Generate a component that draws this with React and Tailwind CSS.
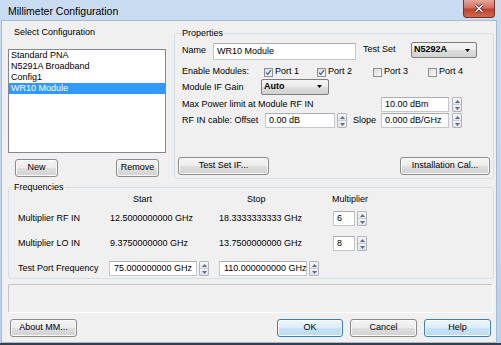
import React from 'react';

function Btn({ children, className = '', primary }) {
  return (
    <div
      className={`flex items-center justify-center h-[18px] rounded-[3px] border shadow-[inset_0_0_0_1px_#fbfbfb] ${
        primary
          ? 'border-[#3c7fb1] bg-[linear-gradient(#ecf5fc_0%,#dcecf9_50%,#c8e2f7_50%,#bcdaf3_100%)]'
          : 'border-[#8a8a8a] bg-[linear-gradient(#f4f4f4_0%,#ececec_50%,#dedede_50%,#d2d2d2_100%)]'
      } ${className}`}
    >
      {children}
    </div>
  );
}

function Spin({ className = '' }) {
  return (
    <div className={`flex flex-col w-[10px] h-[15px] border border-[#b3b7bd] rounded-[1px] ${className}`}>
      <div className="flex-1 flex items-center justify-center border-b border-[#c9ccd1] bg-[linear-gradient(#f7f7f7,#e4e6e9)]">
        <svg width="5" height="3" viewBox="0 0 5 3">
          <path d="M0 3 L2.5 0 L5 3Z" fill="#5a6e92" />
        </svg>
      </div>
      <div className="flex-1 flex items-center justify-center bg-[linear-gradient(#f1f2f3,#dfe2e6)]">
        <svg width="5" height="3" viewBox="0 0 5 3">
          <path d="M0 0 L5 0 L2.5 3Z" fill="#5a6e92" />
        </svg>
      </div>
    </div>
  );
}

function Field({ value, className = '' }) {
  return (
    <div className={`h-[15px] bg-white border border-[#c3c7cd] border-t-[#abadb3] pl-[3px] leading-[13px] whitespace-nowrap ${className}`}>
      {value}
    </div>
  );
}

function Combo({ value, className = '' }) {
  return (
    <div
      className={`flex items-center justify-between h-[16px] border border-[#7e7e7e] rounded-[2px] bg-[linear-gradient(#f4f4f4_0%,#ececec_50%,#dedede_50%,#d2d2d2_100%)] pl-[2px] pr-[6px] ${className}`}
    >
      <span className="font-bold">{value}</span>
      <svg width="5" height="3" viewBox="0 0 5 3">
        <path d="M0 0 L5 0 L2.5 3Z" fill="#000" />
      </svg>
    </div>
  );
}

function Check({ checked, label, className = '' }) {
  return (
    <div className={`flex items-center ${className}`}>
      <div className="w-[9px] h-[9px] border border-[#8e8f8f] bg-[linear-gradient(135deg,#dadada,#fbfbfb)] flex items-center justify-center">
        {checked && (
          <svg width="7" height="7" viewBox="0 0 7 7">
            <path d="M1 3.6 L2.8 5.4 L6 1.2" stroke="#2b5aa6" strokeWidth="1.2" fill="none" />
          </svg>
        )}
      </div>
      <span className="ml-[2px]">{label}</span>
    </div>
  );
}

const configs = ['Standard PNA', 'N5291A Broadband', 'Config1', 'WR10 Module'];

export default function App() {
  return (
    <div className="w-[501px] h-[345px] flex flex-col bg-[linear-gradient(#c9dcf2,#bcd2ec)] border-b-2 border-[#34404f] font-['Liberation_Sans',Arial,sans-serif] text-[9px] text-black overflow-hidden">
      {/* Title bar */}
      <div className="h-[21px] flex justify-between shrink-0">
        <div className="pl-[8px] pt-[4px] text-[10.5px] leading-[14px]">Millimeter Configuration</div>
        <div className="mr-[6px] w-[32px] h-[18px] rounded-b-[4px] border border-t-0 border-[#7a2f27] bg-[linear-gradient(#e7a89c_0%,#d4705f_45%,#c1412f_55%,#cf6a4f_100%)] flex items-center justify-center">
          <svg width="10" height="9" viewBox="0 0 10 9">
            <path d="M1.5 1 L8.5 8 M8.5 1 L1.5 8" stroke="#4a1b15" strokeWidth="3" />
            <path d="M1.5 1 L8.5 8 M8.5 1 L1.5 8" stroke="#ffffff" strokeWidth="1.6" />
          </svg>
        </div>
      </div>

      {/* Client area */}
      <div className="flex-1 ml-[2px] mr-[5px] mb-[1px] bg-[#f0f0f0] shadow-[0_0_0_1px_#a8bad0] flex flex-col">
        {/* Top section */}
        <div className="flex h-[158px] shrink-0">
          {/* Select configuration */}
          <div className="ml-[6px] w-[158px] flex flex-col">
            <div className="mt-[5px] pl-[6px] h-[12px] leading-[12px]">Select Configuration</div>
            <div className="mt-[11px] h-[104px] border border-[#828790] bg-white">
              {configs.map((c, i) => (
                <div
                  key={c}
                  className={`h-[11px] leading-[11px] pl-[2px] ${i === 3 ? 'bg-[#3399ff] text-white' : ''}`}
                >
                  {c}
                </div>
              ))}
            </div>
            <div className="mt-[6px] flex pl-[7px]">
              <Btn className="w-[43px]">New</Btn>
              <Btn className="w-[43px] ml-[58px]">Remove</Btn>
            </div>
          </div>

          {/* Properties */}
          <fieldset className="ml-[8px] mt-[6px] w-[320px] self-start border border-[#d5dfe5] rounded-[3px] pl-[7px] pr-[3px] pb-[3px]">
            <legend className="px-[1px] -ml-[1px] h-[12px] leading-[12px]">Properties</legend>

            <div className="mt-[3px] h-[18px] flex items-center">
              <span className="w-[31px]">Name</span>
              <Field value="WR10 Module" className="w-[143px] h-[17px] leading-[15px]" />
              <span className="ml-[7px] w-[48px] -mt-[3px]">Test Set</span>
              <Combo value="N5292A" className="w-[66px] self-start" />
            </div>

            <div className="mt-[6px] h-[12px] flex items-center">
              <span className="w-[82px]">Enable Modules:</span>
              <Check checked label="Port 1" className="w-[53px]" />
              <Check checked label="Port 2" className="w-[56px]" />
              <Check label="Port 3" className="w-[55px]" />
              <Check label="Port 4" />
            </div>

            <div className="mt-[1px] h-[15px] flex items-center">
              <span className="w-[79px] mt-[2px]">Module IF Gain</span>
              <Combo value="Auto" className="w-[68px] h-[15px]" />
            </div>

            <div className="mt-[3px] h-[15px] flex items-center">
              <span className="w-[199px]">Max Power limit at Module RF IN</span>
              <Field value="10.00 dBm" className="w-[68px]" />
              <Spin className="ml-[3px]" />
            </div>

            <div className="mt-[1px] h-[15px] flex items-center">
              <span className="w-[83px]">RF IN cable: Offset</span>
              <Field value="0.00 dB" className="w-[70px]" />
              <Spin className="ml-[2px]" />
              <span className="ml-[6px] w-[28px]">Slope</span>
              <Field value="0.000 dB/GHz" className="w-[68px]" />
              <Spin className="ml-[3px]" />
            </div>

            <div className="mt-[29px] flex">
              <Btn className="w-[91px] -ml-[4px]">Test Set IF...</Btn>
              <Btn className="w-[90px] ml-auto">Installation Cal...</Btn>
            </div>
          </fieldset>
        </div>

        {/* Frequencies */}
        <fieldset className="ml-[6px] mt-[2px] w-[486px] border border-[#d5dfe5] rounded-[3px] pl-[5px] pb-[2px]">
          <legend className="px-[1px] -ml-[1px] h-[12px] leading-[12px]">Frequencies</legend>

          <div className="mt-[1px] h-[12px] flex items-center pl-[4px]">
            <span className="w-[92px]" />
            <span className="w-[109px] pl-[23px]">Start</span>
            <span className="w-[114px] pl-[28px]">Stop</span>
            <span className="-ml-[1px]">Multiplier</span>
          </div>

          <div className="mt-[5px] h-[15px] flex items-center pl-[4px]">
            <span className="w-[92px]">Multiplier RF IN</span>
            <span className="w-[109px]">12.5000000000 GHz</span>
            <span className="w-[114px]">18.3333333333 GHz</span>
            <Field value="6" className="w-[22px]" />
            <Spin className="ml-[2px]" />
          </div>

          <div className="mt-[10px] h-[15px] flex items-center pl-[4px]">
            <span className="w-[92px]">Multiplier LO IN</span>
            <span className="w-[109px]">9.3750000000 GHz</span>
            <span className="w-[114px]">13.7500000000 GHz</span>
            <Field value="8" className="w-[22px]" />
            <Spin className="ml-[2px]" />
          </div>

          <div className="mt-[10px] h-[15px] flex items-center pl-[4px]">
            <span className="w-[91px]">Test Port Frequency</span>
            <div className="w-[110px] flex items-center">
              <Field value="75.000000000 GHz" className="w-[88px] pl-[4px]" />
              <Spin className="ml-[2px]" />
            </div>
            <div className="flex items-center">
              <Field value="110.000000000 GHz" className="w-[88px] pl-[4px]" />
              <Spin className="ml-[2px]" />
            </div>
          </div>
        </fieldset>

        {/* Status area */}
        <div className="mt-[5px] ml-[6px] w-[485px] h-[29px] shrink-0 border border-t-[#c4c4c4] border-l-[#c4c4c4] border-b-[#ffffff] border-r-[#ffffff] rounded-[2px]" />

        {/* Dialog buttons */}
        <div className="mt-[6px] flex">
          <Btn className="ml-[8px] w-[67px]">About MM...</Btn>
          <Btn primary className="ml-[200px] w-[66px]">OK</Btn>
          <Btn className="ml-[7px] w-[67px]">Cancel</Btn>
          <Btn primary className="ml-[7px] w-[67px]">Help</Btn>
        </div>
      </div>
    </div>
  );
}
